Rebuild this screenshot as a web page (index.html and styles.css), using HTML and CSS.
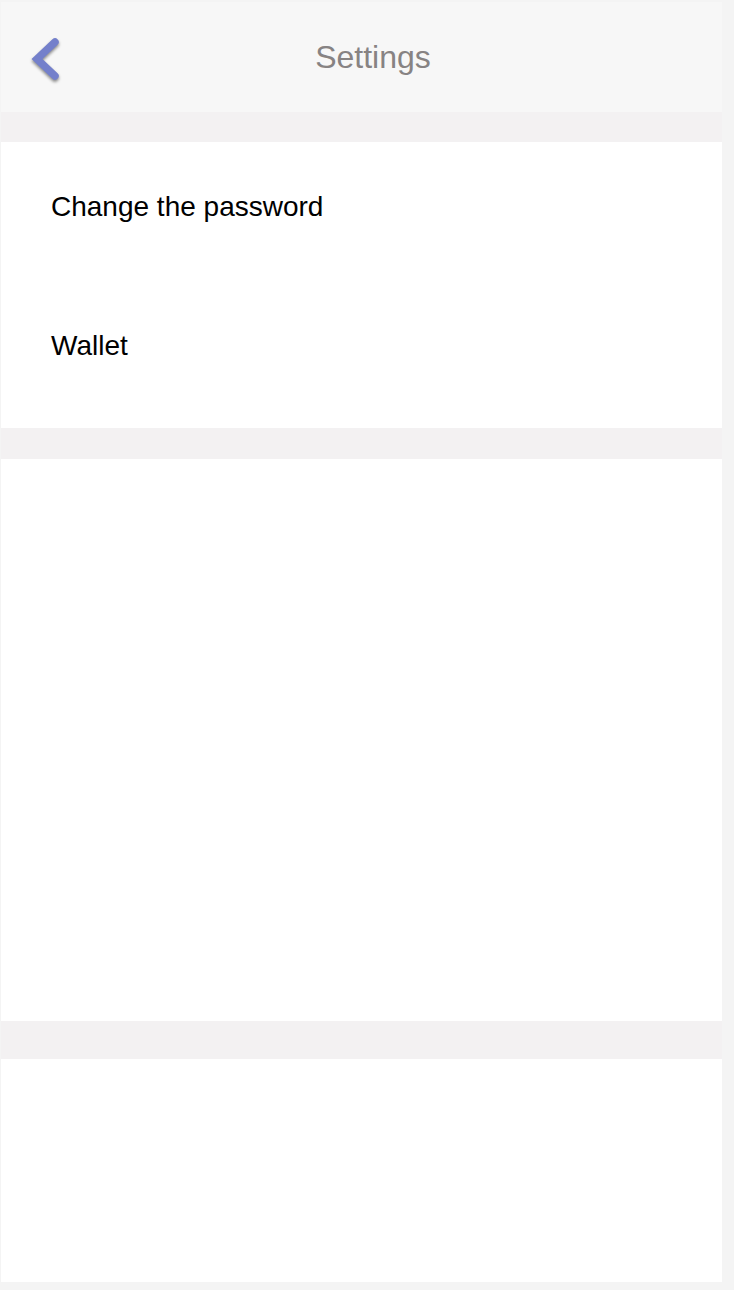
FILE: index.html
```html
<!DOCTYPE html>
<html>
<head>
<meta charset="utf-8">
<link rel="stylesheet" href="styles.css">
</head>
<body>
<div class="page">
  <header class="topbar">
    <div class="back">
      <svg class="chevron" width="40" height="50" viewBox="0 0 40 50">
        <path d="M26 8 L8 25 L26 42" fill="none" stroke="#7480cb" stroke-width="7.5" stroke-linecap="round" stroke-linejoin="miter"/>
      </svg>
    </div>
    <h1 class="title">Settings</h1>
    <div class="spacer"></div>
  </header>
  <div class="gap gap-1"></div>
  <section class="card card-menu">
    <div class="item">Change the password</div>
    <div class="item">Wallet</div>
  </section>
  <div class="gap gap-2"></div>
  <section class="card card-2"></section>
  <div class="gap gap-3"></div>
  <section class="card card-3"></section>
</div>
</body>
</html>
```

FILE: styles.css
```css
html, body {
  margin: 0;
  padding: 0;
  background: #f4f4f4;
}
.page {
  padding: 2px 12px 8px 1px;
  display: flex;
  flex-direction: column;
  font-family: "Liberation Sans", Arial, sans-serif;
}
.topbar {
  height: 110px;
  background: #f7f7f7;
  display: flex;
  align-items: center;
}
.back {
  width: 70px;
  height: 110px;
  display: flex;
  align-items: center;
}
.chevron {
  margin-left: 28px;
  margin-top: 4px;
  filter: drop-shadow(0 2px 1.5px rgba(0,0,0,0.45));
}
.title {
  flex: 1;
  margin: 0;
  text-align: center;
  font-size: 32px;
  font-weight: normal;
  color: #878383;
}
.spacer {
  width: 47px;
}
.gap {
  background: #f3f1f2;
}
.gap-1 { height: 30px; }
.gap-2 { height: 31px; }
.gap-3 { height: 38px; }
.card {
  background: #ffffff;
}
.card-menu {
  height: 286px;
  box-sizing: border-box;
}
.item {
  height: 139px;
  box-sizing: border-box;
  padding: 49px 0 0 50px;
  font-size: 28px;
  line-height: 32px;
  color: #000;
}
.card-2 { height: 562px; }
.card-3 { height: 223px; }
```
